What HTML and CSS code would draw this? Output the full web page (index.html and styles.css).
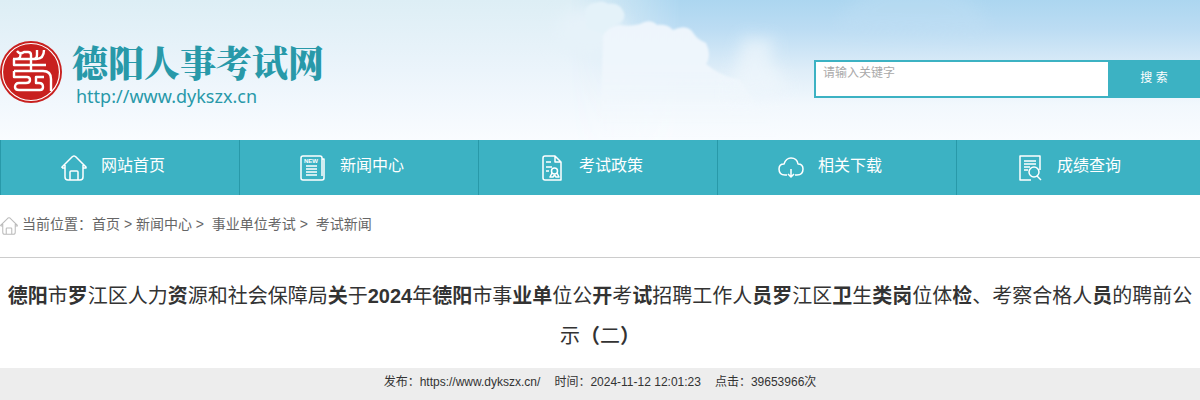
FILE: index.html
```
<!DOCTYPE html>
<html lang="zh-CN">
<head>
    <meta charset="UTF-8">
    <meta name="viewport" content="width=device-width, initial-scale=1.0">
    <title>德阳人事考试网</title>
    <link rel="stylesheet" href="styles.css">
</head>
<body>
    <header class="header">
        <svg class="sky" viewBox="0 0 1200 140" preserveAspectRatio="xMidYMin slice" aria-hidden="true">
            <defs>
                <linearGradient id="haze" x1="0" y1="0" x2="0" y2="1">
                    <stop offset="0" stop-color="#ddeef5"/>
                    <stop offset="0.5" stop-color="#ebf4fb"/>
                    <stop offset="1" stop-color="#f9fcff"/>
                </linearGradient>
                <linearGradient id="blue" x1="0" y1="0" x2="0" y2="1">
                    <stop offset="0" stop-color="#acd6f0"/>
                    <stop offset="0.2" stop-color="#bbdcf3"/>
                    <stop offset="0.5" stop-color="#deedf8"/>
                    <stop offset="0.75" stop-color="#f2f8fd"/>
                    <stop offset="1" stop-color="#f9fcff"/>
                </linearGradient>
                <linearGradient id="fade" gradientUnits="userSpaceOnUse" x1="570" y1="0" x2="680" y2="0">
                    <stop offset="0" stop-color="#fff" stop-opacity="0"/>
                    <stop offset="1" stop-color="#fff"/>
                </linearGradient>
                <mask id="right"><rect x="560" width="640" height="140" fill="url(#fade)"/></mask>
                <linearGradient id="cloud" x1="0" y1="0" x2="0" y2="1">
                    <stop offset="0" stop-color="#edf5fc"/>
                    <stop offset="0.4" stop-color="#eff6fc"/>
                    <stop offset="1" stop-color="#f7fbfe" stop-opacity="0"/>
                </linearGradient>
                <filter id="soft" x="-30%" y="-30%" width="160%" height="160%"><feGaussianBlur stdDeviation="8"/></filter>
                <filter id="edge"><feGaussianBlur stdDeviation="1"/></filter>
            </defs>
            <rect width="1200" height="140" fill="url(#haze)"/>
            <rect width="1200" height="140" fill="url(#blue)" mask="url(#right)"/>
            <ellipse cx="590" cy="34" rx="34" ry="26" fill="#e6f2f9" filter="url(#soft)"/>
            <path d="M585 10Q590 2 596 3Q602 0 608 4Q620 2 624 13Q626 20 618 24L604 34L586 28Z" fill="#e4f2f9" filter="url(#edge)"/>
            <path d="M603 36Q606 28 619 25Q630 27 640 24Q650 18 657 25Q668 24 673 30Q688 23 694 34Q698 40 706 43Q712 56 706 64Q720 76 740 80L780 140H600Z" fill="url(#cloud)" filter="url(#edge)"/>
            <path d="M738 56L746 34L754 40L774 38L770 60L790 90L730 100Z" fill="#f0f7fc" opacity=".7" filter="url(#soft)"/>
            <path d="M836 30Q850-10 900-20Q980-20 990 36Z" fill="#c5e1f4" opacity=".3" filter="url(#soft)"/>
        </svg>
        <a class="logo" href="#">
            <svg class="logo-seal" viewBox="0 0 62 62" aria-hidden="true">
                <circle cx="31" cy="31" r="31" fill="#c8201f"/>
                <circle cx="31" cy="31" r="28.5" fill="none" stroke="#fff" stroke-width="1.2"/>
                <g fill="none" stroke="#fff" stroke-width="2.4" stroke-linejoin="round">
                    <path d="M17 10Q20 14 24 11H28Q31 11 31 14V29M13 18H36Q44 18 44 9M37 9V14Q37 18 34 18M20 11Q22 18 16 18M18 24H46M14 18V24H20"/>
                    <path d="M14 30H43Q51 30 51 38V50M14 30V36H27Q30 36 30 39Q30 42 26 42H19Q15 42 15 46Q15 49 19 49H40Q43 49 43 46Q43 42 39 42H36V36H44"/>
                </g>
            </svg>
            <span class="logo-text">
                <span class="logo-name">德阳人事考试网</span>
                <span class="logo-url">http://www.dykszx.cn</span>
            </span>
        </a>
        <form class="search">
            <input type="text" class="search-input" placeholder="请输入关键字" aria-label="请输入关键字">
            <button type="submit" class="search-btn">搜 索</button>
        </form>
    </header>

    <nav class="nav">
        <a class="nav-item" href="#">
            <svg class="nav-icon" viewBox="0 0 26 26"><path d="M1 13V12L11.500 1.500Q13 0.500 14.500 1.500L25 12V13H22M4 10V22Q4 25 7 25H19Q22 25 22 22V10M1 13H4M9 25V17Q9 16 10 16H16Q17 16 17 17V25"/></svg>
            <span>网站首页</span>
        </a>
        <a class="nav-item" href="#">
            <svg class="nav-icon" viewBox="0 0 26 26"><path d="M22 4V3Q22 1 20 1H3Q1 1 1 3V23Q1 25 3 25H22Q24 25 24 23V4H22V21M6 11H17M6 14H17M6 17H17M6 20H17"/><text class="nav-icon-new" x="4" y="8">NEW</text></svg>
            <span>新闻中心</span>
        </a>
        <a class="nav-item" href="#">
            <svg class="nav-icon" viewBox="0 0 26 26"><path d="M16 1H6Q4 1 4 3V23Q4 25 6 25H22V7L16 1V7H22M7 7H12M7 12H13M7 16H10"/><circle cx="15.500" cy="16" r="3"/><path d="M13 18L11 22H14L15.500 20L17 22H20L18 18"/></svg>
            <span>考试政策</span>
        </a>
        <a class="nav-item" href="#">
            <svg class="nav-icon" viewBox="0 0 26 26"><path d="M9 20H7Q1 20 1 14Q1 9 6 9Q8 3 13 3Q19 3 20 9Q25 9 25 14Q25 20 19 20H17M13 14V22M10 19L13 22L16 19"/></svg>
            <span>相关下载</span>
        </a>
        <a class="nav-item" href="#">
            <svg class="nav-icon" viewBox="0 0 26 26"><path d="M14 25H3V1H23V15M7 6H19M7 9H19M7 12H13M7 15H11"/><circle cx="17" cy="17" r="5"/><path d="M20 21L24 25"/></svg>
            <span>成绩查询</span>
        </a>
    </nav>

    <div class="crumbs">
        <svg class="crumbs-icon" viewBox="0 0 26 26" aria-hidden="true"><path d="M1 13V12L11.500 1.500Q13 0.500 14.500 1.500L25 12V13H22M4 10V22Q4 25 7 25H19Q22 25 22 22V10M1 13H4M9 25V17Q9 16 10 16H16Q17 16 17 17V25"/></svg>
        <p>当前位置：<a href="#">首页</a> &gt; <a href="#">新闻中心</a> &gt;&nbsp; <a href="#">事业单位考试</a> &gt;&nbsp; <a href="#">考试新闻</a></p>
    </div>

    <main>
        <h1 class="title"><b>德阳</b>市<b>罗</b>江区人力<b>资</b>源和社会保障局<b>关</b>于<b>2024</b>年<b>德阳</b>市事<b>业单</b>位公<b>开</b>考<b>试</b>招聘工作人<b>员罗</b>江区<b>卫</b>生<b>类岗</b>位体<b>检</b>、考察合格人<b>员</b>的聘前公示<b>（</b>二<b>）</b></h1>
        <div class="info">
            <span>发布：https://www.dykszx.cn/</span>
            <span>时间：2024-11-12 12:01:23</span>
            <span>点击：39653966次</span>
        </div>
    </main>
</body>
</html>
```
FILE: styles.css
```
* {
    margin: 0;
    padding: 0;
    box-sizing: border-box;
}

body {
    font-family: "Liberation Sans", "Noto Sans CJK SC", sans-serif;
    font-size: 12px;
    color: #333;
    background: #fff;
}

a {
    color: inherit;
    text-decoration: none;
}

/* 头部 */
.header {
    position: relative;
    display: flex;
    justify-content: space-between;
    align-items: flex-start;
    height: 140px;
    padding-top: 40px;
}

.sky {
    position: absolute;
    top: 0;
    left: 0;
    width: 100%;
    height: 100%;
    z-index: -1;
}

.logo {
    display: flex;
    gap: 10px;
    color: #2899a9;
}

.logo-seal {
    width: 62px;
    height: 64px;
}

.logo-text {
    display: flex;
    flex-direction: column;
}

.logo-name {
    font-family: "Noto Serif CJK SC", "Noto Sans CJK SC", serif;
    font-size: 36px;
    font-weight: 900;
    line-height: 44px;
}

.logo-url {
    padding-left: 4px;
    font-family: "Noto Sans", sans-serif;
    font-size: 18px;
    line-height: 24px;
}

.search {
    display: flex;
    width: 386px;
    height: 38px;
    margin-top: 20px;
}

.search-input {
    flex: 1;
    min-width: 0;
    padding: 0 7px 12px;
    border: 2px solid #3cb2c3;
    border-right: none;
    background: #fff;
    font: inherit;
}

.search-input::placeholder {
    color: #a9a9a9;
}

.search-btn {
    width: 92px;
    padding-bottom: 6px;
    border: none;
    background: #3cb2c3;
    color: #fff;
    font: inherit;
    cursor: pointer;
}

/* 导航 */
.nav {
    display: flex;
    height: 55px;
    background: #3cb2c3;
    color: #fff;
    font-size: 16px;
}

.nav-item {
    display: flex;
    align-items: center;
    gap: 14px;
    flex: 0 1 239px;
    padding-left: 60px;
    border-left: 1px solid #2899a9;
    line-height: 24px;
}

.nav-item span {
    padding-bottom: 4px;
}

.nav-icon {
    width: 26px;
    height: 26px;
    fill: none;
    stroke: #fff;
    stroke-width: 1.5;
    stroke-linejoin: round;
}

.nav-icon-new {
    fill: #fff;
    stroke: none;
    font-size: 6px;
    font-weight: bold;
}

/* 当前位置 */
.crumbs {
    display: flex;
    align-items: center;
    gap: 4px;
    height: 63px;
    border-bottom: 1px solid #ccc;
    color: #666;
    font-size: 14px;
}

.crumbs p {
    padding-bottom: 6px;
}

.crumbs-icon {
    width: 18px;
    height: 18px;
    fill: none;
    stroke: #bbb;
    stroke-width: 1.5;
}

/* 正文标题 */
.title {
    padding: 18px 0 12px;
    font-size: 20px;
    font-weight: 400;
    line-height: 40px;
    text-align: center;
}

.info {
    display: flex;
    justify-content: center;
    gap: 14px;
    min-height: 32px;
    background: #ededed;
    line-height: 28px;
}
```
